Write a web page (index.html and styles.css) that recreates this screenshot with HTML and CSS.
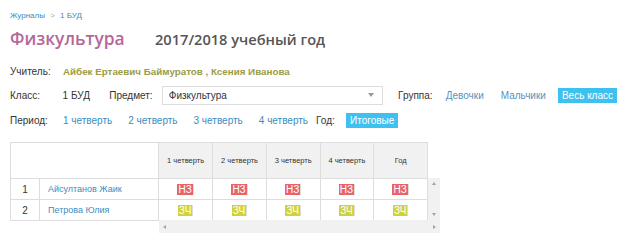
FILE: index.html
```html
<!doctype html>
<html lang="ru">
<head>
  <title>Журнал</title>
  <meta charset="utf-8">
  <link rel="stylesheet" href="styles.css">
</head>
<body>
<div class="breadcrumb"><a href="#">Журналы</a> <span class="sep">&gt;</span> <a href="#">1 БУД</a></div>

<div class="titleRow">
  <h1 class="subjectTitle">Физкультура</h1>
  <h2 class="yearTitle">2017/2018 учебный год</h2>
</div>

<div class="infoRow teacherRow">
  <span class="label">Учитель:</span>
  <span class="teacherNames">Айбек Ертаевич Баймуратов , Ксения Иванова</span>
</div>

<div class="infoRow classRow">
  <span class="label">Класс:</span>
  <span class="classValue">1 БУД</span>
  <span class="subjectLabel">Предмет:</span>
  <div class="subjectSelect">
    <span>Физкультура</span>
    <span class="caret"></span>
  </div>
  <span class="groupLabel">Группа:</span>
  <a class="option optionGirls" href="#">Девочки</a>
  <a class="option optionBoys" href="#">Мальчики</a>
  <a class="option optionSelected" href="#">Весь класс</a>
</div>

<div class="infoRow periodRow">
  <span class="label">Период:</span>
  <a class="period" href="#">1 четверть</a>
  <a class="period" href="#">2 четверть</a>
  <a class="period" href="#">3 четверть</a>
  <a class="period periodLast" href="#">4 четверть</a>
  <span class="yearLabel">Год:</span>
  <a class="option optionSelected" href="#">Итоговые</a>
</div>

<div class="journal">
  <table class="pupilTable">
    <tr class="headRow">
      <th colspan="2"></th>
    </tr>
    <tr>
      <td class="num">1</td>
      <td class="name"><a href="#">Айсултанов Жаик</a></td>
    </tr>
    <tr>
      <td class="num">2</td>
      <td class="name"><a href="#">Петрова Юлия</a></td>
    </tr>
  </table>

  <div class="marksArea">
    <table class="marksTable">
      <tr class="headRow">
        <th>1 четверть</th>
        <th>2 четверть</th>
        <th>3 четверть</th>
        <th>4 четверть</th>
        <th>Год</th>
      </tr>
      <tr>
        <td><span class="mark markBad">НЗ</span></td>
        <td><span class="mark markBad">НЗ</span></td>
        <td><span class="mark markBad">НЗ</span></td>
        <td><span class="mark markBad">НЗ</span></td>
        <td><span class="mark markBad">НЗ</span></td>
      </tr>
      <tr>
        <td><span class="mark markOk">ЗЧ</span></td>
        <td><span class="mark markOk">ЗЧ</span></td>
        <td><span class="mark markOk">ЗЧ</span></td>
        <td><span class="mark markOk">ЗЧ</span></td>
        <td><span class="mark markOk">ЗЧ</span></td>
      </tr>
    </table>
    <div class="vScroll">
      <span class="arrow arrowUp"></span>
      <span class="arrow arrowDown"></span>
    </div>
    <div class="hScroll">
      <span class="arrow arrowLeft"></span>
      <span class="arrow arrowRight"></span>
    </div>
  </div>
</div>

</body>
</html>
```

FILE: styles.css
```css
body {
  margin: 0;
  padding: 10px 10px 0 10px;
  font-family: "Liberation Sans", Arial, sans-serif;
  font-size: 10px;
  color: #333;
  background: #fff;
}

a {
  text-decoration: none;
  color: #3d8cc0;
}

.breadcrumb {
  font-size: 8px;
  height: 12px;
  line-height: 12px;
}

.breadcrumb .sep {
  color: #aaa;
  margin: 0 3px;
}

.titleRow {
  display: flex;
  align-items: baseline;
  height: 28px;
  margin-top: 4px;
}

.subjectTitle {
  margin: 0;
  font-family: "Open Sans", sans-serif;
  font-weight: 600;
  font-size: 17.4px;
  color: #b5679b;
  width: 145px;
}

.yearTitle {
  margin: 0;
  font-family: "Open Sans", sans-serif;
  font-weight: 600;
  font-size: 14.6px;
  color: #555;
}

.infoRow {
  display: flex;
  align-items: center;
  white-space: nowrap;
}

.label {
  width: 53px;
  color: #333;
}

.teacherRow {
  height: 16px;
  margin-top: 9px;
}

.teacherNames {
  font-weight: bold;
  font-size: 9.8px;
  color: #9c9c45;
}

.classRow {
  height: 20px;
  margin-top: 6px;
}

.classValue {
  width: 47px;
}

.subjectLabel {
  width: 53px;
}

.subjectSelect {
  box-sizing: border-box;
  width: 223px;
  height: 19px;
  border: 1px solid #ddd;
  display: flex;
  align-items: center;
  justify-content: space-between;
  padding: 0 8px 0 6px;
  margin-right: 15px;
}

.caret {
  width: 0;
  height: 0;
  border-left: 3px solid transparent;
  border-right: 3px solid transparent;
  border-top: 4px solid #999;
}

.groupLabel {
  width: 48px;
}

.option {
  flex-shrink: 0;
  color: #5a92bb;
}

.optionGirls {
  margin-right: 17px;
}

.optionBoys {
  margin-right: 12px;
}

.optionSelected {
  background: #3fc1ef;
  color: #fff;
  padding: 2px 4px;
}

.periodRow {
  height: 20px;
  margin-top: 5px;
}

.period {
  margin-right: 16px;
  color: #3d8cc0;
}

.periodLast {
  margin-right: 8px;
}

.yearLabel {
  width: 30px;
}

.journal {
  display: flex;
  align-items: flex-start;
  margin-top: 12px;
}

table {
  border-collapse: collapse;
}

th, td {
  border: 1px solid #ddd;
  padding: 0;
}

.pupilTable {
  width: 149px;
}

.pupilTable .headRow th {
  height: 35px;
  background: #fff;
}

.pupilTable td {
  height: 20px;
}

.num {
  width: 28px;
  text-align: center;
  color: #333;
}

.name {
  padding-left: 8px;
  font-size: 9px;
}

.name a {
  color: #3d8cc0;
}

.marksArea {
  display: grid;
  grid-template-columns: 269px 12px;
  grid-template-rows: 36px 42px 13px;
}

.marksTable {
  grid-column: 1;
  grid-row: 1 / 3;
  width: 269px;
  table-layout: fixed;
}

.marksTable th {
  height: 35px;
  background: #f1f1f1;
  font-weight: normal;
  font-size: 7.5px;
  color: #333;
  border-left: none;
}

.marksTable td {
  height: 20px;
  text-align: center;
  border-left: none;
}

.marksTable tr :last-child {
  border-right: 1px solid #ddd;
}

.mark {
  display: inline-block;
  font-size: 10px;
  line-height: 11px;
  padding: 0 1px;
  color: #fff;
}

.markBad {
  background: #e8636a;
}

.markOk {
  background: #cfd23a;
}

.vScroll {
  grid-column: 2;
  grid-row: 2;
  background: #f1f1f1;
  display: flex;
  flex-direction: column;
  justify-content: space-between;
  align-items: center;
  padding: 4px 0;
}

.hScroll {
  grid-column: 1 / 3;
  grid-row: 3;
  background: #f1f1f1;
  display: flex;
  justify-content: space-between;
  align-items: center;
  padding: 0 4px;
}

.arrow {
  width: 0;
  height: 0;
}

.arrowUp {
  border-left: 2px solid transparent;
  border-right: 2px solid transparent;
  border-bottom: 3px solid #a3a3a3;
}

.arrowDown {
  border-left: 2px solid transparent;
  border-right: 2px solid transparent;
  border-top: 3px solid #a3a3a3;
}

.arrowLeft {
  border-top: 2px solid transparent;
  border-bottom: 2px solid transparent;
  border-right: 3px solid #a3a3a3;
}

.arrowRight {
  border-top: 2px solid transparent;
  border-bottom: 2px solid transparent;
  border-left: 3px solid #a3a3a3;
}
```
